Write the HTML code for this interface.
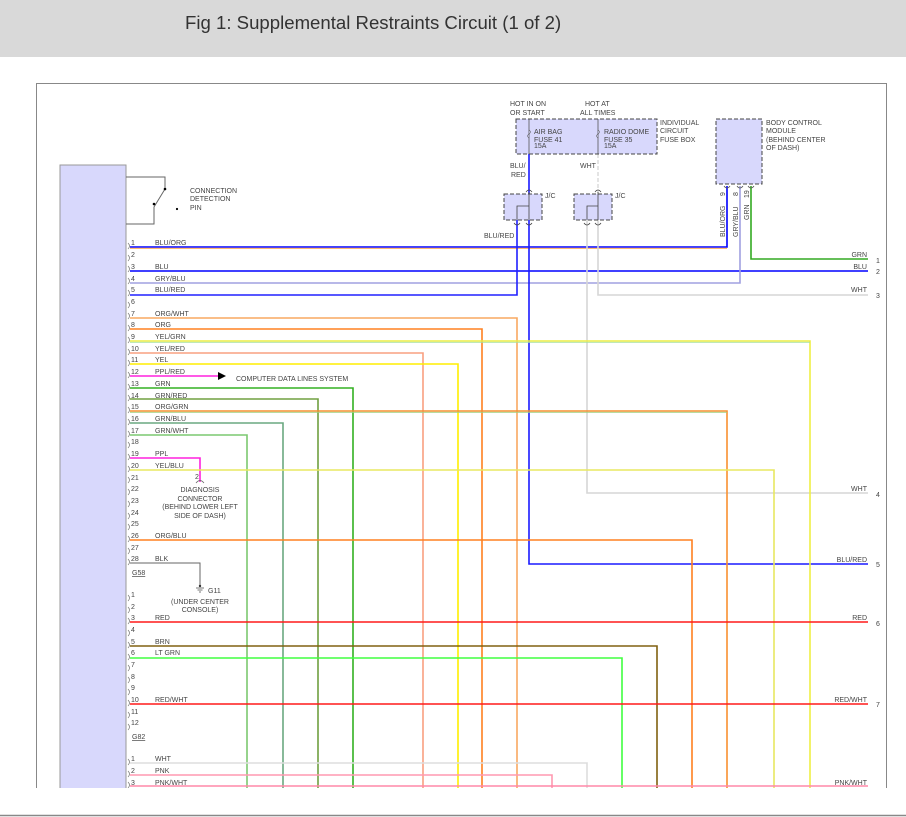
<!DOCTYPE html>
<html><head><meta charset="utf-8"><style>
html,body{margin:0;padding:0;background:#fff;}
body{width:906px;height:817px;overflow:hidden;position:relative;font-family:"Liberation Sans",sans-serif;}
.hdr{position:absolute;left:0;top:0;width:906px;height:57px;background:#d9d9d9;}
.hdr span{position:absolute;left:185px;top:12px;font-size:18.6px;color:#333;}
svg{position:absolute;left:0;top:0;}
svg text{font-family:"Liberation Sans",sans-serif;font-size:7px;fill:#444;}
</style></head><body>
<div class="hdr"><span>Fig 1: Supplemental Restraints Circuit (1 of 2)</span></div>
<svg width="906" height="817" viewBox="0 0 906 817">
<defs><clipPath id="c"><rect x="0" y="0" width="906" height="788"/></clipPath></defs>
<line x1="0" y1="815.5" x2="906" y2="815.5" stroke="#888" stroke-width="1.5"/>
<g clip-path="url(#c)">
<rect x="36.5" y="83.5" width="850" height="740" fill="none" stroke="#888" stroke-width="1"/>
<rect x="60" y="165" width="66" height="640" fill="#d8d8fc" stroke="#999" stroke-width="1"/>
<polyline points="126,177 165,177 165,189 154,207 154,224 126,224" fill="none" stroke="#666" stroke-width="1"/>
<circle cx="165" cy="189" r="1.3" fill="#000"/><circle cx="154" cy="204" r="1.3" fill="#000"/><circle cx="177" cy="209" r="1.1" fill="#000"/>
<text x="190" y="193">CONNECTION</text><text x="190" y="201">DETECTION</text><text x="190" y="210">PIN</text>

<g fill="none" stroke-width="1.6">
<polyline points="130,247 727,247 727,186" stroke="#0000ff"/>
<line x1="130" y1="248.3" x2="727" y2="248.3" stroke="#ffa040" stroke-width="0.9"/>
<polyline points="751,186 751,259 868,259" stroke="#33aa22"/>
<line x1="130" y1="271" x2="868" y2="271" stroke="#0000ff"/>
<polyline points="130,283 740,283 740,186" stroke="#a0a0e0"/>
<polyline points="130,295 517,295 517,220" stroke="#2020ff"/>
<polyline points="598,220 598,295 868,295" stroke="#d6d6d6"/>
<polyline points="587,220 587,493 868,493" stroke="#d6d6d6"/>
<polyline points="529,154 529,564 868,564" stroke="#1a1aff"/>
<line x1="598" y1="154" x2="598" y2="193" stroke="#ddd" stroke-dasharray="4,2"/>
<polyline points="130,318 517,318 517,800" stroke="#f8a860"/>
<polyline points="130,329 482,329 482,800" stroke="#ff8020"/>
<polyline points="130,341 810,341 810,800" stroke="#eeee44"/>
<line x1="130" y1="342.3" x2="810" y2="342.3" stroke="#a8e0a0" stroke-width="0.9"/>
<polyline points="130,353 423,353 423,800" stroke="#f8a080"/>
<polyline points="130,364 458,364 458,800" stroke="#ffee00"/>
<line x1="130" y1="376" x2="218" y2="376" stroke="#ff22dd"/>
<polyline points="130,388 353,388 353,800" stroke="#33b022"/>
<polyline points="130,399 318,399 318,800" stroke="#70a040"/>
<polyline points="130,411 727,411 727,800" stroke="#f89030"/>
<line x1="130" y1="412.3" x2="727" y2="412.3" stroke="#a0d080" stroke-width="0.9"/>
<polyline points="130,423 283,423 283,800" stroke="#6aa880"/>
<polyline points="130,435 247,435 247,800" stroke="#7cc870"/>
<polyline points="130,458 200,458 200,482" stroke="#ff22dd"/>
<polyline points="130,470 774,470 774,800" stroke="#e8e860"/>
<polyline points="130,540 692,540 692,800" stroke="#ff8020"/>
<polyline points="130,563 200,563 200,585" stroke="#666" stroke-width="1"/>
<line x1="130" y1="622" x2="868" y2="622" stroke="#ff1a1a"/>
<polyline points="130,646 657,646 657,800" stroke="#806010"/>
<polyline points="130,658 622,658 622,800" stroke="#40ff40"/>
<line x1="130" y1="704" x2="868" y2="704" stroke="#ff1a1a"/>
<polyline points="130,763 587,763 587,800" stroke="#dddddd"/>
<polyline points="130,775 552,775 552,800" stroke="#ff99b0"/>
<line x1="130" y1="786" x2="868" y2="786" stroke="#ff88a8"/>
</g>
<polygon points="218,372 218,380 226,376" fill="#000"/>
<text x="236" y="381">COMPUTER DATA LINES SYSTEM</text>
<path d="M196,483 Q200,478 204,483" fill="none" stroke="#666" stroke-width="0.8"/>
<text x="195" y="479">2</text>
<g text-anchor="middle"><text x="200" y="492">DIAGNOSIS</text><text x="200" y="501">CONNECTOR</text><text x="200" y="509">(BEHIND LOWER LEFT</text><text x="200" y="518">SIDE OF DASH)</text>
<text x="200" y="604">(UNDER CENTER</text><text x="200" y="612">CONSOLE)</text></g>
<g stroke="#555" stroke-width="0.8"><line x1="196" y1="588" x2="204" y2="588"/><line x1="197.5" y1="590" x2="202.5" y2="590"/><line x1="199" y1="592" x2="201" y2="592"/></g>
<circle cx="200" cy="586" r="1.2" fill="#333"/>
<text x="208" y="593">G11</text>

<g>
<text x="131" y="245">1</text><text x="155" y="245">BLU/ORG</text>
<text x="131" y="257">2</text>
<text x="131" y="269">3</text><text x="155" y="269">BLU</text>
<text x="131" y="281">4</text><text x="155" y="281">GRY/BLU</text>
<text x="131" y="292">5</text><text x="155" y="292">BLU/RED</text>
<text x="131" y="304">6</text>
<text x="131" y="316">7</text><text x="155" y="316">ORG/WHT</text>
<text x="131" y="327">8</text><text x="155" y="327">ORG</text>
<text x="131" y="339">9</text><text x="155" y="339">YEL/GRN</text>
<text x="131" y="351">10</text><text x="155" y="351">YEL/RED</text>
<text x="131" y="362">11</text><text x="155" y="362">YEL</text>
<text x="131" y="374">12</text><text x="155" y="374">PPL/RED</text>
<text x="131" y="386">13</text><text x="155" y="386">GRN</text>
<text x="131" y="398">14</text><text x="155" y="398">GRN/RED</text>
<text x="131" y="409">15</text><text x="155" y="409">ORG/GRN</text>
<text x="131" y="421">16</text><text x="155" y="421">GRN/BLU</text>
<text x="131" y="433">17</text><text x="155" y="433">GRN/WHT</text>
<text x="131" y="444">18</text>
<text x="131" y="456">19</text><text x="155" y="456">PPL</text>
<text x="131" y="468">20</text><text x="155" y="468">YEL/BLU</text>
<text x="131" y="480">21</text><text x="131" y="491">22</text><text x="131" y="503">23</text><text x="131" y="515">24</text><text x="131" y="526">25</text>
<text x="131" y="538">26</text><text x="155" y="538">ORG/BLU</text>
<text x="131" y="550">27</text>
<text x="131" y="561">28</text><text x="155" y="561">BLK</text>
<text x="132" y="575" text-decoration="underline">G58</text>
<text x="131" y="597">1</text><text x="131" y="609">2</text>
<text x="131" y="620">3</text><text x="155" y="620">RED</text>
<text x="131" y="632">4</text>
<text x="131" y="644">5</text><text x="155" y="644">BRN</text>
<text x="131" y="655">6</text><text x="155" y="655">LT GRN</text>
<text x="131" y="667">7</text><text x="131" y="679">8</text><text x="131" y="690">9</text>
<text x="131" y="702">10</text><text x="155" y="702">RED/WHT</text>
<text x="131" y="714">11</text><text x="131" y="725">12</text>
<text x="132" y="739" text-decoration="underline">G82</text>
<text x="131" y="761">1</text><text x="155" y="761">WHT</text>
<text x="131" y="773">2</text><text x="155" y="773">PNK</text>
<text x="131" y="785">3</text><text x="155" y="785">PNK/WHT</text>
</g>
<g fill="none" stroke="#777" stroke-width="0.7">
<path d="M128,243 q3,3 0,6 M128,255 q3,3 0,6 M128,266 q3,3 0,6 M128,278 q3,3 0,6 M128,290 q3,3 0,6 M128,302 q3,3 0,6 M128,313 q3,3 0,6 M128,325 q3,3 0,6 M128,337 q3,3 0,6 M128,349 q3,3 0,6 M128,360 q3,3 0,6 M128,372 q3,3 0,6 M128,384 q3,3 0,6 M128,395 q3,3 0,6 M128,407 q3,3 0,6 M128,419 q3,3 0,6 M128,431 q3,3 0,6 M128,442 q3,3 0,6 M128,454 q3,3 0,6 M128,466 q3,3 0,6 M128,477 q3,3 0,6 M128,489 q3,3 0,6 M128,501 q3,3 0,6 M128,513 q3,3 0,6 M128,524 q3,3 0,6 M128,536 q3,3 0,6 M128,548 q3,3 0,6 M128,559 q3,3 0,6"/>
<path d="M128,595 q3,3 0,6 M128,607 q3,3 0,6 M128,618 q3,3 0,6 M128,630 q3,3 0,6 M128,642 q3,3 0,6 M128,654 q3,3 0,6 M128,665 q3,3 0,6 M128,677 q3,3 0,6 M128,689 q3,3 0,6 M128,700 q3,3 0,6 M128,712 q3,3 0,6 M128,724 q3,3 0,6"/>
<path d="M128,759 q3,3 0,6 M128,771 q3,3 0,6 M128,782 q3,3 0,6"/>
</g>
<g text-anchor="end">
<text x="867" y="257">GRN</text><text x="867" y="269">BLU</text><text x="867" y="292">WHT</text>
<text x="867" y="491">WHT</text><text x="867" y="562">BLU/RED</text><text x="867" y="620">RED</text>
<text x="867" y="702">RED/WHT</text><text x="867" y="785">PNK/WHT</text>
</g>
<g><text x="876" y="263">1</text><text x="876" y="274">2</text><text x="876" y="298">3</text><text x="876" y="497">4</text><text x="876" y="567">5</text><text x="876" y="626">6</text><text x="876" y="707">7</text></g>

<rect x="516" y="119" width="141" height="35" fill="#d8d8fc" stroke="#444" stroke-width="1" stroke-dasharray="4,2"/>
<line x1="529" y1="119" x2="529" y2="154" stroke="#555" stroke-width="0.8"/>
<line x1="598" y1="119" x2="598" y2="154" stroke="#555" stroke-width="0.8"/>
<path d="M529,130 q2.5,2 0,4 q-2.5,2 0,4" fill="#d8d8fc" stroke="#555" stroke-width="0.8"/>
<path d="M598,130 q2.5,2 0,4 q-2.5,2 0,4" fill="#d8d8fc" stroke="#555" stroke-width="0.8"/>
<text x="534" y="134">AIR BAG</text><text x="534" y="142">FUSE 41</text><text x="534" y="148">15A</text>
<text x="604" y="134">RADIO DOME</text><text x="604" y="142">FUSE 35</text><text x="604" y="148">15A</text>
<text x="660" y="125">INDIVIDUAL</text><text x="660" y="133">CIRCUIT</text><text x="660" y="142">FUSE BOX</text>
<text x="510" y="106">HOT IN ON</text><text x="510" y="115">OR START</text>
<text x="585" y="106">HOT AT</text><text x="580" y="115">ALL TIMES</text>
<text x="510" y="168">BLU/</text><text x="511" y="177">RED</text><text x="580" y="168">WHT</text>
<text x="484" y="238">BLU/RED</text>
<rect x="504" y="194" width="38" height="26" fill="#d8d8fc" stroke="#444" stroke-dasharray="4,2"/>
<rect x="574" y="194" width="38" height="26" fill="#d8d8fc" stroke="#444" stroke-dasharray="4,2"/>
<g fill="none" stroke="#444" stroke-width="0.8">
<path d="M529,192 v28 M529,206 h-12 v14 M526,192 q3,-4 6,0 M514,223 q3,4 6,0 M526,223 q3,4 6,0"/>
<path d="M598,192 v28 M598,206 h-11 v14 M595,192 q3,-4 6,0 M584,223 q3,4 6,0 M595,223 q3,4 6,0"/>
</g>
<text x="545" y="198">J/C</text><text x="615" y="198">J/C</text>
<rect x="716" y="119" width="46" height="65" fill="#d8d8fc" stroke="#444" stroke-dasharray="4,2"/>
<g fill="none" stroke="#555" stroke-width="0.8"><path d="M724,186 q3,4 6,0 M737,186 q3,4 6,0 M748,186 q3,4 6,0"/></g>
<text x="766" y="125">BODY CONTROL</text><text x="766" y="133">MODULE</text><text x="766" y="142">(BEHIND CENTER</text><text x="766" y="150">OF DASH)</text>
<g transform="rotate(-90)">
<text x="-196" y="725">9</text><text x="-237" y="725">BLU/ORG</text>
<text x="-196" y="738">8</text><text x="-237" y="738">GRY/BLU</text>
<text x="-198" y="749">19</text><text x="-220" y="749">GRN</text>
</g>
</g>
</svg>
</body></html>
